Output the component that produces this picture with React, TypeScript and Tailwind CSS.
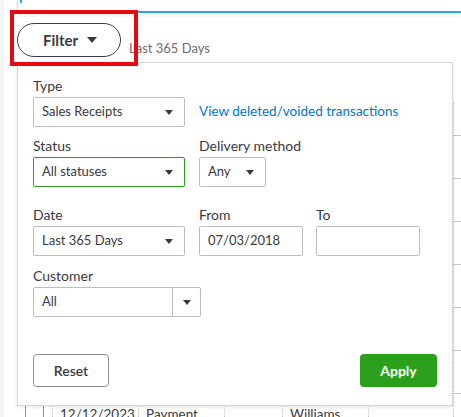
import React from "react";

function Caret({ size = "sm" }: { size?: "sm" | "lg" }) {
  const w = size === "lg" ? 10 : 8;
  const h = size === "lg" ? 6 : 5;
  return (
    <svg width={w} height={h} viewBox={`0 0 ${w} ${h}`} className="shrink-0">
      <path d={`M0 0H${w}L${w / 2} ${h}Z`} fill="#393a3d" />
    </svg>
  );
}

function Label({ children }: { children: React.ReactNode }) {
  return <div className="text-[14px] leading-[17px] text-[#393a3d]">{children}</div>;
}

function Select(props: { value: string; width: string; active?: boolean }) {
  return (
    <div
      className={`mt-[3px] flex h-[30px] items-center justify-between rounded-[2px] border pl-[8px] pr-[11px] text-[13px] text-[#393a3d] ${props.width} ${
        props.active ? "border-[#2ca01c]" : "border-[#babec5]"
      }`}
    >
      <span>{props.value}</span>
      <Caret />
    </div>
  );
}

function Input(props: { value?: string }) {
  return (
    <div className="mt-[3px] flex h-[30px] w-[104px] items-center rounded-[2px] border border-[#babec5] pl-[8px] text-[13px] text-[#393a3d]">
      {props.value}
    </div>
  );
}

const ticks = [0, 1, 2, 3, 4, 5, 6];

export default function App() {
  return (
    <div className="flex h-[417px] w-[461px] overflow-hidden bg-white font-['Lato',sans-serif] text-[#393a3d]">
      <div className="w-[4px] shrink-0 bg-[#f4f5f8]" />
      <div className="flex min-w-0 flex-1 flex-col">
        {/* header card edge */}
        <div className="ml-[13px] h-[13px] shrink-0 border-b-2 border-l border-b-[#29a6ec] border-l-[#d4d7dc] pl-[2px] shadow-[0_3px_4px_rgba(0,0,0,0.07)]">
          <div className="h-[3px] w-[2px] bg-[#29a6ec]" />
        </div>

        {/* filter toggle */}
        <div className="relative ml-[13px] mt-[10px] flex shrink-0 items-end">
          <button className="flex h-[34px] w-[104px] items-center justify-center gap-[9px] rounded-full border-[1.5px] border-[#3d3e42] pl-[2px] text-[15px] font-bold text-[#393a3d]">
            Filter
            <Caret size="lg" />
          </button>
          <span className="mb-[1px] ml-[8px] text-[13px] leading-[16px] text-[#6b6c72]">Last 365 Days</span>
          <div className="pointer-events-none absolute left-[-7px] top-[-13px] h-[56px] w-[128px] border-4 border-[#e8080f]" />
        </div>

        {/* dropdown panel + table edge */}
        <div className="mt-[5px] flex shrink-0">
          <div className="ml-[13px] h-[344px] w-[436px] shrink-0 border border-[#d4d7dc] bg-white px-[15px] pt-[14px] shadow-[0_1px_3px_rgba(0,0,0,0.12)]">
            <Label>Type</Label>
            <div className="flex items-center gap-[14px]">
              <Select value="Sales Receipts" width="w-[152px]" />
              <span className="mt-[1px] text-[13.5px] text-[#0077c5]">View deleted/voided transactions</span>
            </div>

            <div className="mt-[10px] flex gap-[14px]">
              <div className="w-[152px]">
                <Label>Status</Label>
                <Select value="All statuses" width="w-[152px]" active />
              </div>
              <div>
                <Label>Delivery method</Label>
                <Select value="Any" width="w-[67px]" />
              </div>
            </div>

            <div className="mt-[19px] flex">
              <div className="w-[152px]">
                <Label>Date</Label>
                <Select value="Last 365 Days" width="w-[152px]" />
              </div>
              <div className="ml-[14px]">
                <Label>From</Label>
                <Input value="07/03/2018" />
              </div>
              <div className="ml-[13px]">
                <Label>To</Label>
                <Input />
              </div>
            </div>

            <div className="mt-[11px]">
              <Label>Customer</Label>
              <div className="mt-[3px] flex h-[30px] w-[168px] rounded-[2px] border border-[#babec5] text-[13px]">
                <div className="flex w-[139px] items-center border-r border-[#babec5] pl-[8px]">All</div>
                <div className="flex flex-1 items-center justify-center">
                  <Caret />
                </div>
              </div>
            </div>

            <div className="mt-[37px] flex justify-between">
              <button className="h-[33px] w-[76px] rounded-[4px] border border-[#8d9096] text-[14px] font-semibold text-[#393a3d]">
                Reset
              </button>
              <button className="h-[33px] w-[77px] rounded-[4px] bg-[#2ca01c] text-[14px] font-bold text-white">
                Apply
              </button>
            </div>
          </div>

          <div className="flex-1 pt-[40px]">
            <div className="flex h-full flex-col gap-[42px] border-l border-dotted border-[#c4c6ca] pt-[33px]">
              {ticks.map((t) => (
                <div key={t} className="-ml-[2px] h-px bg-[#c4c6ca]" />
              ))}
            </div>
          </div>
        </div>

        {/* table row peeking out below the panel */}
        <div className="flex flex-1 text-[13.5px] leading-[14px] text-[#393a3d]">
          <div className="w-[21px] shrink-0" />
          <div className="w-[18px] shrink-0 border-l border-[#8d9096]" />
          <div className="w-[9px] shrink-0 border-l border-[#8d9096]" />
          <div className="w-[86px] shrink-0 border-l border-dotted border-[#c4c6ca] pl-[7px] pt-[1px]">12/12/2023</div>
          <div className="w-[86px] shrink-0 border-l border-dotted border-[#c4c6ca] pl-[7px] pt-[1px]">Payment</div>
          <div className="w-[58px] shrink-0 border-l border-dotted border-[#c4c6ca]" />
          <div className="w-[86px] shrink-0 border-l border-dotted border-[#c4c6ca] pl-[7px] pt-[1px]">Williams</div>
          <div className="w-[85px] shrink-0 border-l border-dotted border-[#c4c6ca]" />
          <div className="flex-1 border-l border-dotted border-[#c4c6ca]" />
        </div>
      </div>
    </div>
  );
}
